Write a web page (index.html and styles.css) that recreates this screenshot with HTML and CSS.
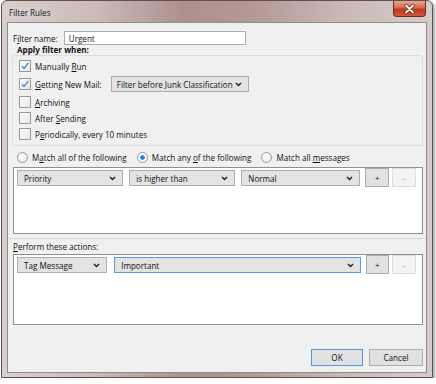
FILE: index.html
```html
<!DOCTYPE html>
<html lang="en">

<head>
    <meta charset="UTF-8">
    <title>Filter Rules</title>
    <link rel="stylesheet" href="styles.css">
</head>

<body>
    <div class="window">
        <div class="titlebar">
            <span class="title">Filter Rules</span>
            <div class="close">
                <svg width="13" height="10" viewBox="0 0 13 10">
                    <path d="M3 1.5l7 7M10 1.5l-7 7" stroke="#5a2318" stroke-width="3.2" stroke-linecap="round"/>
                    <path d="M3 1.5l7 7M10 1.5l-7 7" stroke="#fff" stroke-width="1.8" stroke-linecap="round"/>
                </svg>
            </div>
        </div>

        <div class="client">
            <div class="name-row">
                <label for="filterName">F<u>i</u>lter name:</label>
                <input type="text" id="filterName" value="Urgent">
            </div>

            <div class="caption">Apply filter when:</div>
            <div class="group">
                <div class="check-row">
                    <span class="checkbox checked"></span>
                    <span>Manually <u>R</u>un</span>
                </div>
                <div class="check-row tall">
                    <span class="checkbox checked"></span>
                    <span><u>G</u>etting New Mail:</span>
                    <div class="combo junk"><span>Filter before Junk Classification</span></div>
                </div>
                <div class="check-row">
                    <span class="checkbox"></span>
                    <span><u>A</u>rchiving</span>
                </div>
                <div class="check-row">
                    <span class="checkbox"></span>
                    <span>After <u>S</u>ending</span>
                </div>
                <div class="check-row">
                    <span class="checkbox"></span>
                    <span>P<u>e</u>riodically, every 10 minutes</span>
                </div>
            </div>

            <div class="radio-row">
                <div class="radio-item"><span class="radio"></span><span>M<u>a</u>tch all of the following</span></div>
                <div class="radio-item"><span class="radio selected"></span><span>Match any <u>o</u>f the following</span></div>
                <div class="radio-item"><span class="radio"></span><span>Match all <u>m</u>essages</span></div>
            </div>

            <div class="listbox rules">
                <div class="list-row">
                    <div class="combo priority"><span>Priority</span></div>
                    <div class="combo operator"><span>is higher than</span></div>
                    <div class="combo value"><span>Normal</span></div>
                    <button class="small">+</button>
                    <button class="small" disabled>&ndash;</button>
                </div>
            </div>

            <div class="actions-caption"><u>P</u>erform these actions:</div>
            <div class="listbox actions">
                <div class="list-row">
                    <div class="combo action"><span>Tag Message</span></div>
                    <div class="combo tag focused"><span>Important</span></div>
                    <button class="small">+</button>
                    <button class="small" disabled>&ndash;</button>
                </div>
            </div>

            <div class="dialog-buttons">
                <button class="dlg default">OK</button>
                <button class="dlg">Cancel</button>
            </div>
        </div>
    </div>
</body>

</html>
```

FILE: styles.css
```css
body {
    margin: 0;
    background: #fff;
    font-family: "Open Sans", "Noto Sans", sans-serif;
    font-size: 8.1px;
    color: #111;
}

u {
    text-decoration-thickness: 1px;
    text-underline-offset: 1px;
}

.window {
    width: 432px;
    height: 378px;
    box-sizing: border-box;
    margin-left: 1px;
    border: 1px solid #5e5150;
    border-radius: 6px 6px 0 0;
    padding: 0 5px 4px 5px;
    background: linear-gradient(90deg, #d9cfce 0%, #cbbab8 22%, #ad918e 42%, #b49895 58%, #c9b7b5 78%, #d6cccb 100%);
    box-shadow: 2px 2px 3px rgba(0, 0, 0, 0.35);
    display: flex;
    flex-direction: column;
}

.titlebar {
    height: 21px;
    display: flex;
    justify-content: space-between;
    align-items: flex-start;
}

.title {
    padding: 6px 0 0 2px;
    color: #111;
    text-shadow: 0 0 6px rgba(255, 255, 255, 0.9);
}

.close {
    width: 31px;
    height: 15px;
    margin-right: 1px;
    border: 1px solid #6b2c20;
    border-top: none;
    border-radius: 0 0 4px 4px;
    background: linear-gradient(#e9a491 0%, #d66a51 45%, #c0391f 55%, #d0583c 100%);
    display: flex;
    justify-content: center;
    align-items: center;
}

.client {
    flex: 1;
    border: 1px solid #8c8c8c;
    background: #f0f0f0;
    display: flex;
    flex-direction: column;
}

.name-row {
    margin-top: 8px;
    padding-left: 5px;
    height: 14px;
    display: flex;
    align-items: center;
    gap: 6px;
}

.name-row input {
    width: 182px;
    height: 14px;
    box-sizing: border-box;
    border: 1px solid #abadb3;
    padding: 0 4px;
    font: inherit;
    color: #111;
    background: #fff;
    outline: none;
}

.caption {
    height: 10px;
    line-height: 10px;
    padding-left: 9px;
    font-weight: bold;
}

.group {
    margin: 0 3px 0 4px;
    border: 1px solid #dcdcdc;
    border-radius: 3px;
    padding: 2px 0 3px 6px;
}

.check-row {
    height: 16px;
    display: flex;
    align-items: center;
    gap: 4px;
}

.check-row.tall {
    height: 20px;
}

.checkbox {
    width: 12px;
    height: 12px;
    box-sizing: border-box;
    border: 1px solid #9a9a9a;
    background: linear-gradient(135deg, #fbfbfb, #e6e6e6);
    flex-shrink: 0;
}

.checkbox.checked {
    background: url("data:image/svg+xml,%3Csvg xmlns='http://www.w3.org/2000/svg' width='10' height='10'%3E%3Cpath d='M2 5.2l2 2.2L8.3 2' stroke='%234a8ad6' stroke-width='1.3' fill='none'/%3E%3C/svg%3E") center no-repeat, linear-gradient(135deg, #fbfbfb, #e6e6e6);
}

.combo {
    height: 16px;
    box-sizing: border-box;
    border: 1px solid #adadad;
    background: #e3e3e3;
    padding: 0 6px 0 6px;
    white-space: nowrap;
    display: flex;
    align-items: center;
    justify-content: space-between;
}

.combo::after {
    content: "";
    width: 7px;
    height: 5px;
    flex-shrink: 0;
    background: url("data:image/svg+xml,%3Csvg xmlns='http://www.w3.org/2000/svg' width='7' height='5'%3E%3Cpath d='M1 1l2.5 2.5L6 1' stroke='%23222' stroke-width='1.5' fill='none'/%3E%3C/svg%3E") no-repeat;
}

.combo.junk {
    width: 138px;
    margin-left: 5px;
    padding-left: 5px;
}

.combo.focused {
    border-color: #5a9be0;
}

.radio-row {
    margin-top: 5px;
    height: 12px;
    padding-left: 9px;
    display: flex;
    align-items: center;
    gap: 10px;
}

.radio-item {
    display: flex;
    align-items: center;
    gap: 4px;
}

.radio {
    width: 11px;
    height: 11px;
    box-sizing: border-box;
    border: 1px solid #9a9a9a;
    border-radius: 50%;
    background: radial-gradient(circle at 35% 35%, #fff, #e4e4e4);
}

.radio.selected {
    background: radial-gradient(circle, #1f7be0 0, #2a86e8 2px, #fff 2.6px, #eee 100%);
}

.listbox {
    margin: 4px 3px 0 5px;
    border: 1px solid #8e8f94;
    background: #fff;
    box-sizing: border-box;
}

.listbox.rules {
    height: 67px;
}

.listbox.actions {
    height: 71px;
    margin-top: 1px;
}

.list-row {
    display: flex;
    align-items: flex-start;
    padding: 0 3px 0 3px;
}

.list-row .combo {
    margin-top: 2px;
    margin-right: 6px;
}

.combo.priority { width: 107px; }
.combo.operator { width: 107px; }
.combo.value { width: 120px; margin-right: 5px; }
.combo.action { width: 91px; margin-right: 7px; }
.combo.tag { width: 249px; margin-right: 5px; }

button {
    font: inherit;
    color: #111;
    box-sizing: border-box;
    border: 1px solid #adadad;
    background: #e1e1e1;
    padding: 0;
}

button.small {
    width: 24px;
    height: 19px;
    margin-right: 3px;
    font-size: 8px;
}

button.small:disabled {
    background: #f4f4f4;
    border-color: #dcdcdc;
    color: #a8a8a8;
}

.actions-caption {
    margin: 4px 0 0 0;
    border-top: 1px solid #dadada;
    padding: 2px 0 0 5px;
    height: 12px;
    line-height: 12px;
}

.dialog-buttons {
    margin-top: 24px;
    display: flex;
    justify-content: flex-end;
    gap: 6px;
    padding-right: 3px;
}

button.dlg {
    width: 54px;
    height: 17px;
}

button.dlg.default {
    width: 52px;
    border-color: #4d97df;
}
```
